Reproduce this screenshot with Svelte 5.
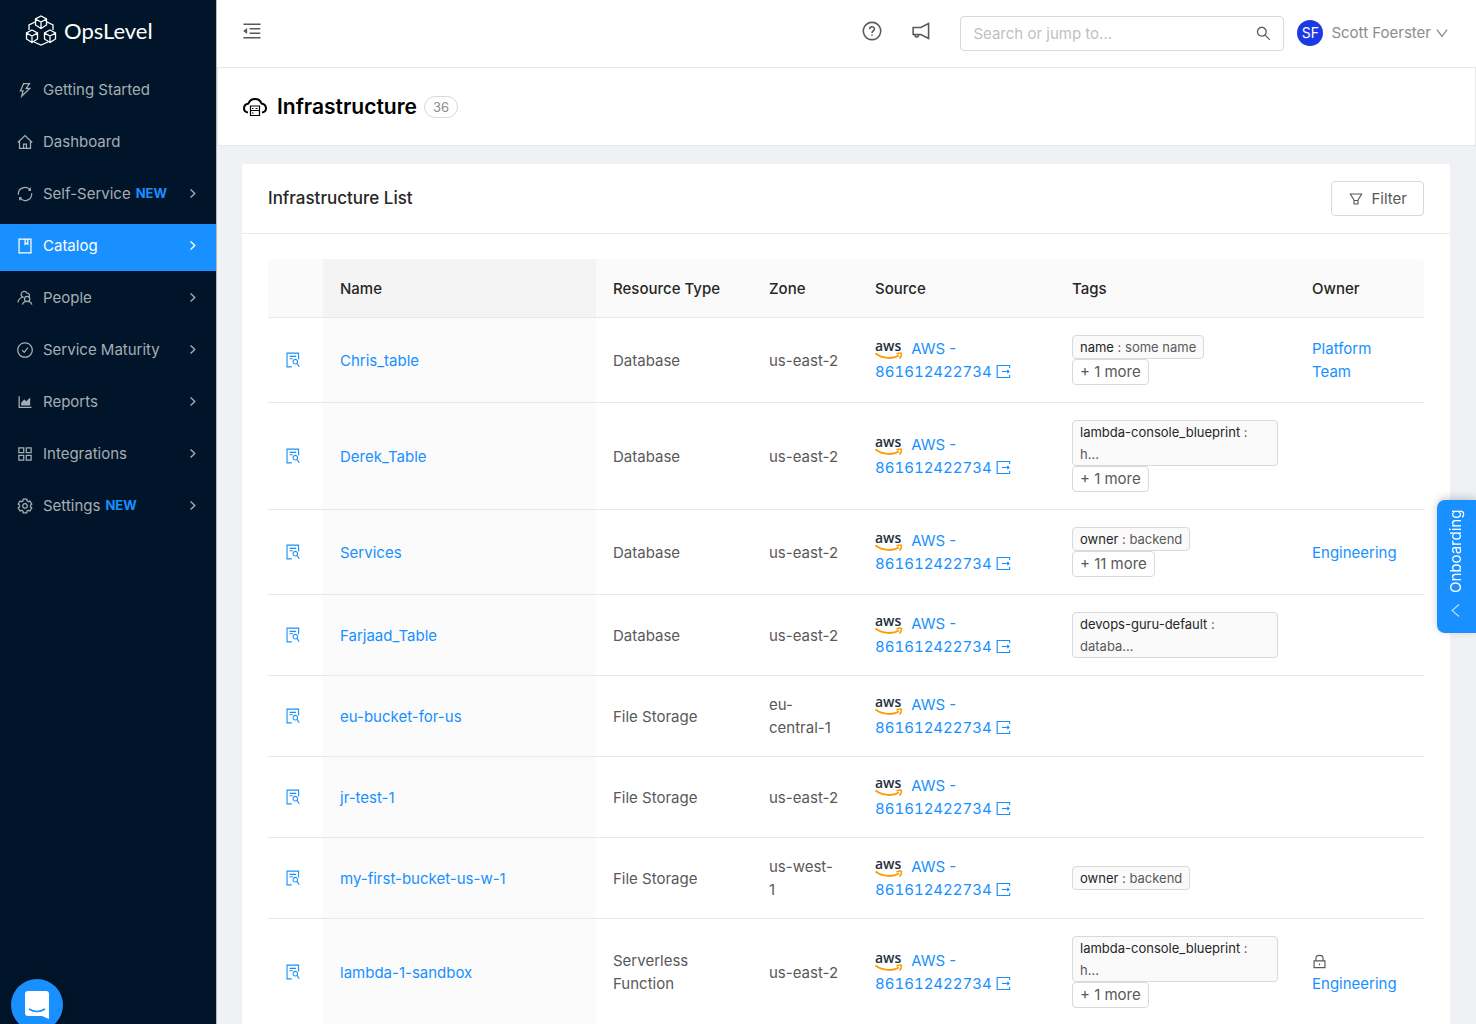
<script>
  const menu = [
    { label: 'Getting Started', icon: 'bolt' },
    { label: 'Dashboard', icon: 'home' },
    { label: 'Self-Service', icon: 'sync', isNew: true, children: true },
    { label: 'Catalog', icon: 'book', children: true, active: true },
    { label: 'People', icon: 'people', children: true },
    { label: 'Service Maturity', icon: 'check', children: true },
    { label: 'Reports', icon: 'chart', children: true },
    { label: 'Integrations', icon: 'apps', children: true },
    { label: 'Settings', icon: 'gear', isNew: true, children: true }
  ];

  const rows = [
    { name: 'Chris_table', type: 'Database', zone: 'us-east-2', tag: ['name', 'some name'], more: 1, owner: 'Platform Team' },
    { name: 'Derek_Table', type: 'Database', zone: 'us-east-2', tag: ['lambda-console_blueprint', 'h...'], more: 1 },
    { name: 'Services', type: 'Database', zone: 'us-east-2', tag: ['owner', 'backend'], more: 11, owner: 'Engineering' },
    { name: 'Farjaad_Table', type: 'Database', zone: 'us-east-2', tag: ['devops-guru-default', 'databa...'] },
    { name: 'eu-bucket-for-us', type: 'File Storage', zone: 'eu-\ncentral-1' },
    { name: 'jr-test-1', type: 'File Storage', zone: 'us-east-2' },
    { name: 'my-first-bucket-us-w-1', type: 'File Storage', zone: 'us-west-\n1', tag: ['owner', 'backend'] },
    { name: 'lambda-1-sandbox', type: 'Serverless Function', zone: 'us-east-2', tag: ['lambda-console_blueprint', 'h...'], more: 1, owner: 'Engineering', locked: true }
  ];

  const account = '861612422734';

  // six-toothed outline for the settings icon
  function gearPath() {
    const points = [];
    for (let i = 0; i < 6; i++) {
      for (const [offset, radius] of [[-21, 355], [-15, 450], [15, 450], [21, 355]]) {
        const a = ((i * 60 + 30 + offset) * Math.PI) / 180;
        points.push(`${Math.round(512 + radius * Math.cos(a))} ${Math.round(512 + radius * Math.sin(a))}`);
      }
    }
    return `M${points.join('L')}Z`;
  }

  const strokes = {
    bolt: 'M420 110H800L590 400H820L300 910L390 570H220Z',
    home: 'M50 540L512 100L974 540M160 450V920H864V450M420 920V640H604V920',
    sync: 'M90 560A425 425 0 0 1 850 260M934 464A425 425 0 0 1 174 764M850 110V275H730M174 914V750H294',
    book: 'M130 70H894V954H130ZM520 80V400l85-65 85 65V80',
    people: 'M430 470A190 190 0 1 1 620 190M60 800C70 640 170 520 340 480M650 570m-165 0a165 165 0 1 0 330 0a165 165 0 1 0-330 0M350 940C380 800 490 735 650 735S920 800 950 940M600 180C780 190 820 300 790 420',
    check: 'M512 50a462 462 0 1 0 1 0ZM330 520l130 140 235-300',
    apps: 'M120 120H430V430H120ZM594 120H904V430H594ZM120 594H430V904H120ZM594 594H904V904H594Z',
    gear: gearPath() + 'M512 365a147 147 0 1 0 1 0Z',
    help: 'M512 70a442 442 0 1 0 1 0ZM390 420C390 250 634 250 634 410C634 510 512 500 512 610M512 685V755',
    notice: 'M900 125V899L500 690H110V334H500ZM200 690C200 860 390 860 400 695',
    right: 'M360 190L690 512L360 834',
    down: 'M80 220L512 800L944 220',
    left: 'M750 100L280 512L750 924',
    doc: 'M430 954H130V70H870V480M290 280H710M290 430H500M660 620m-145 0a145 145 0 1 0 290 0a145 145 0 1 0-290 0M770 730L910 940',
    exit: 'M930 280V100H80V924H930V744M400 512H900M770 400L890 512L770 624',
    lock: 'M140 470H884V930H140ZM270 470V280C270 30 754 30 754 280V470M512 640V760'
  };

  const fills = {
    chart: 'M920 812H180V148c0-4-4-8-8-8h-66c-4 0-8 4-8 8v738c0 4 4 8 8 8h814c4 0 8-4 8-8v-66c0-4-4-8-8-8zm-650-84h566c4 0 8-4 8-8V244c0-7-9-11-14-6L592 469 467 345a8 8 0 0 0-11 0L267 554a8 8 0 0 0-3 6V720c0 4 4 8 8 8z',
    fold: 'M408 442h480c4 0 8-4 8-8v-56c0-4-4-8-8-8H408c-4 0-8 4-8 8v56c0 4 4 8 8 8zm-8 204c0 4 4 8 8 8h480c4 0 8-4 8-8v-56c0-4-4-8-8-8H408c-4 0-8 4-8 8v56zm504-486H120c-4 0-8 4-8 8v56c0 4 4 8 8 8h784c4 0 8-4 8-8v-56c0-4-4-8-8-8zm0 632H120c-4 0-8 4-8 8v56c0 4 4 8 8 8h784c4 0 8-4 8-8v-56c0-4-4-8-8-8zM115 519L272 642c6 5 14 0 14-7V389c0-7-8-12-14-7L115 505a9 9 0 0 0 0 14z',
    search: 'M910 854L650 595C690 543 712 479 712 412c0-80-31-155-88-212s-132-88-212-88-155 31-212 88-88 132-88 212 31 155 88 212 132 88 212 88c67 0 131-22 183-62l259 260a8 8 0 0 0 12 0l44-44a8 8 0 0 0 0-12zM570 570C528 613 472 636 412 636s-116-23-158-66S188 472 188 412s23-116 66-158 98-66 158-66 116 23 158 66 66 98 66 158-23 116-66 158z',
    filter: 'M880 154H144c-25 0-40 27-28 48L349 597V838c0 18 14 32 32 32h262c18 0 32-14 32-32V597L908 202c12-21-3-48-28-48zM603 798H421V642h182v156zm10-237l-10 17H421l-10-17L213 226h598L613 561z'
  };
</script>

{#snippet icon(name)}
  <svg class="icon" viewBox="0 0 1024 1024" aria-hidden="true">
    {#if fills[name]}
      <path class="solid" d={fills[name]} />
    {:else}
      <path class="line" d={strokes[name]} />
    {/if}
  </svg>
{/snippet}

{#snippet cube(x, y)}
  <g transform="translate({x} {y})">
    <path d="M0 -6L5.5 -3V3L0 6.5L-5.5 3V-3ZM-5.5 -3L0 0L5.5 -3M0 0V6" />
  </g>
{/snippet}

<div class="layout">
  <aside class="sidebar">
    <a class="brand" href="#home">
      <svg class="brand__mark" viewBox="0 0 32 32" aria-hidden="true">
        {@render cube(16, 8)}
        {@render cube(7, 22)}
        {@render cube(25, 22)}
        <path d="M10 8L4 11V16M22 8L28 11V16M9 28L16 31L23 28" />
      </svg>
      <span>OpsLevel</span>
    </a>
    <nav class="menu">
      {#each menu as item}
        <a class="menu__item" class:active={item.active} href="#{item.icon}">
          {@render icon(item.icon)}
          <span>{item.label}</span>
          {#if item.isNew}<span class="menu__new">NEW</span>{/if}
          {#if item.children}<span class="menu__arrow">{@render icon('right')}</span>{/if}
        </a>
      {/each}
    </nav>
  </aside>

  <div class="content">
    <header class="topbar">
      <button class="plain fold" aria-label="Collapse menu">{@render icon('fold')}</button>
      <button class="plain help" aria-label="Help">{@render icon('help')}</button>
      <button class="plain notice" aria-label="Announcements">{@render icon('notice')}</button>
      <div class="search">
        <input type="text" aria-label="Search" placeholder="Search or jump to..." />
        {@render icon('search')}
      </div>
      <button class="plain user">
        <span class="user__avatar">SF</span>
        <span>Scott Foerster</span>
        {@render icon('down')}
      </button>
    </header>

    <section class="heading">
      <svg class="heading__icon" viewBox="0 0 24 20" aria-hidden="true">
        <path d="M5 15.5C2 15 1 13 1 11.5C1 9 3 7 5.5 6.5C6.5 3.5 9 2 12 2C15 2 17.5 3.5 18.5 6.5C21 7 23 9 23 11.5C23 13 22 15 19 15.5" />
        <path class="thin" d="M7.5 9H16.5V18.5H7.5ZM7.5 13.5H16.5M9 11.5H10.5M9 16H10.5M12.5 11.5H14.5" />
      </svg>
      <h1>Infrastructure</h1>
      <span class="count">36</span>
    </section>

    <main class="card">
      <div class="card__head">
        <h2>Infrastructure List</h2>
        <button class="filter">{@render icon('filter')}Filter</button>
      </div>
      <div class="card__body">
        <table>
          <thead>
            <tr>
              <th class="col-open" aria-label="Details"></th>
              <th class="col-name">Name</th>
              <th class="col-type">Resource Type</th>
              <th class="col-zone">Zone</th>
              <th class="col-source">Source</th>
              <th class="col-tags">Tags</th>
              <th class="col-owner">Owner</th>
            </tr>
          </thead>
          <tbody>
            {#each rows as row}
              <tr>
                <td class="col-open"><a href="#open" aria-label="Open {row.name}">{@render icon('doc')}</a></td>
                <td class="col-name"><a href="#{row.name}">{row.name}</a></td>
                <td>{row.type}</td>
                <td class="col-zone">{row.zone}</td>
                <td>
                  <svg class="aws" viewBox="0 0 28 20" aria-hidden="true">
                    <text x="0" y="11">aws</text>
                    <path class="smile" d="M0.5 13.5C8 19 18 19 24 15.5" />
                    <path class="tip" d="M21.5 14C24 13 26 13 26.5 13.5C26.5 15 26 17 24.5 18.5" />
                  </svg>
                  <a class="source" href="#source">AWS - <span class="account">{account}</span> {@render icon('exit')}</a>
                </td>
                <td>
                  {#if row.tag}
                    <div class="tags">
                      <span class="tag"><b>{row.tag[0]}</b> : <span>{row.tag[1]}</span></span>
                      {#if row.more}<button class="more">+ {row.more} more</button>{/if}
                    </div>
                  {/if}
                </td>
                <td>
                  {#if row.locked}<span class="lock">{@render icon('lock')}</span>{/if}
                  {#if row.owner}<a href="#owner">{row.owner}</a>{/if}
                </td>
              </tr>
            {/each}
          </tbody>
        </table>
      </div>
    </main>
  </div>
</div>

<button class="onboarding"><span>Onboarding</span>{@render icon('left')}</button>

<button class="chat" aria-label="Open chat">
  <svg viewBox="0 0 24 28" aria-hidden="true">
    <path class="chat__box" d="M3 0H21Q24 0 24 3V28L17 25H3Q0 25 0 22V3Q0 0 3 0Z" />
    <path class="chat__smile" d="M4 18Q12 23 20 18" />
  </svg>
</button>

<style>
  :global(body) {
    background: #eff1f5;
  }

  .layout,
  .onboarding,
  .chat {
    font-family: Inter, "Liberation Sans", sans-serif;
    font-size: 15px;
    line-height: 23px;
    color: #595959;
  }

  .layout {
    display: flex;
    min-height: 100vh;
  }

  .layout :global(*) {
    box-sizing: border-box;
  }

  a {
    color: #1890ff;
    text-decoration: none;
  }

  button,
  input {
    font: inherit;
    color: inherit;
  }

  button {
    cursor: pointer;
  }

  .icon {
    width: 15px;
    height: 15px;
    flex: none;
  }

  .solid {
    fill: currentColor;
  }

  .line {
    fill: none;
    stroke: currentColor;
    stroke-width: 80;
  }

  .sidebar {
    width: 217px;
    flex: none;
    background: #001529;
    border-right: 1px solid #b3b9c0;
  }

  .brand {
    display: flex;
    align-items: center;
    gap: 7px;
    height: 68px;
    padding: 0 25px 8px;
    color: #fff;
    font-family: Lato, sans-serif;
    font-size: 22px;
  }

  .brand__mark {
    width: 32px;
    height: 32px;
    fill: none;
    stroke: #fff;
    stroke-width: 1.3;
  }

  .menu__item {
    display: flex;
    align-items: center;
    height: 47px;
    margin-bottom: 5px;
    padding: 0 17px 4px;
    color: #a6adb4;
  }

  .menu__item > .icon {
    width: 16px;
    height: 16px;
    margin-right: 10px;
  }

  .menu__item.active {
    background: #1890ff;
    color: #fff;
  }

  .menu__new {
    margin-left: 5px;
    color: #1890ff;
    font-size: 13px;
    font-weight: 700;
  }

  .menu__arrow {
    display: flex;
    margin-left: auto;
  }

  .menu__arrow .icon {
    width: 13px;
    height: 13px;
  }

  .menu__arrow .line {
    stroke-width: 110;
  }

  .content {
    flex: 1;
    min-width: 0;
  }

  .topbar {
    display: flex;
    align-items: center;
    height: 67px;
    padding-right: 28px;
    background: #fff;
  }

  .plain {
    display: flex;
    align-items: center;
    padding: 0;
    border: 0;
    background: none;
  }

  .fold {
    margin: 0 auto 6px 24px;
  }

  .help,
  .notice {
    margin: 0 29px 5px 0;
  }

  .fold .icon {
    width: 22px;
    height: 22px;
  }

  .help .icon,
  .notice .icon {
    width: 20px;
    height: 20px;
  }

  .search {
    display: flex;
    align-items: center;
    width: 324px;
    height: 35px;
    margin-right: 13px;
    padding: 0 11px 0 12px;
    border: 1px solid #d9d9d9;
    border-radius: 4px;
  }

  .search .icon {
    width: 17px;
    height: 17px;
  }

  .search input {
    flex: 1;
    min-width: 0;
    padding: 0;
    border: 0;
    outline: 0;
    background: none;
  }

  .search input::placeholder {
    color: #bfbfbf;
  }

  .user {
    gap: 5px;
    padding-bottom: 2px;
    color: #8c8c8c;
  }

  .user__avatar {
    width: 26px;
    margin-right: 3px;
    border-radius: 50%;
    background: #1d39e5;
    color: #fff;
    font-size: 14px;
    line-height: 26px;
    text-align: center;
  }

  .user .icon {
    width: 12px;
    height: 12px;
  }

  .user .line {
    stroke-width: 110;
  }

  .heading {
    display: flex;
    align-items: center;
    height: 79px;
    padding: 0 25px;
    border: 1px solid #e8e8e8;
    background: #fff;
  }

  .heading__icon {
    width: 24px;
    height: 20px;
    margin-right: 10px;
    fill: none;
    stroke: #000;
    stroke-width: 2;
  }

  .thin {
    stroke-width: 1.2;
  }

  h1 {
    margin: 0 7px 0 0;
    color: #000;
    font-size: 21px;
    font-weight: 600;
  }

  .count {
    padding: 0 8px;
    border: 1px solid #d9d9d9;
    border-radius: 11px;
    color: #8c8c8c;
    font-size: 13px;
    line-height: 20px;
  }

  .card {
    margin: 18px 26px 26px 25px;
    border-radius: 2px;
    background: #fff;
  }

  .card__head {
    display: flex;
    align-items: center;
    justify-content: space-between;
    height: 70px;
    padding: 0 26px;
    border-bottom: 1px solid #e8e8e8;
  }

  h2 {
    margin: 0;
    color: #262626;
    font-size: 17px;
    font-weight: 500;
  }

  .filter {
    display: flex;
    align-items: center;
    gap: 8px;
    height: 35px;
    padding: 0 16px;
    border: 1px solid #d9d9d9;
    border-radius: 4px;
    background: #fff;
  }

  .filter .icon {
    width: 16px;
    height: 16px;
  }

  .card__body {
    padding: 25px 26px;
  }

  table {
    width: 100%;
    table-layout: fixed;
    border-spacing: 0;
  }

  th,
  td {
    padding: 17px;
    border-bottom: 1px solid #e8e8e8;
    text-align: left;
  }

  th {
    background: #fafafa;
    color: #262626;
    font-weight: 500;
  }

  th.col-name {
    background: #f4f4f4;
  }

  td.col-name {
    background: #fbfbfb;
  }

  thead th {
    height: 59px;
  }

  th.col-open {
    width: 55px;
    border-radius: 4px 0 0;
  }

  td.col-open .icon {
    display: block;
    width: 16px;
    height: 16px;
  }

  td.col-open .line {
    stroke-width: 70;
  }

  .col-type {
    width: 156px;
  }

  .col-zone {
    width: 106px;
    white-space: pre-line;
  }

  .col-source {
    width: 197px;
  }

  .col-tags {
    width: 240px;
  }

  .col-owner {
    width: 129px;
    border-radius: 0 4px 0 0;
  }

  .aws {
    width: 28px;
    height: 20px;
    margin-right: 4px;
    overflow: visible;
    vertical-align: middle;
  }

  .aws text {
    fill: #252f3e;
    font-family: "Open Sans", sans-serif;
    font-size: 14px;
    font-weight: 600;
  }

  .smile,
  .tip {
    fill: none;
    stroke: #ff9900;
    stroke-width: 2;
  }

  .tip {
    stroke-width: 1.5;
  }

  .account {
    font-variant-numeric: tabular-nums;
  }

  .source .icon {
    vertical-align: -2px;
  }

  .tags {
    display: flex;
    flex-direction: column;
    align-items: flex-start;
  }

  .tag,
  .more {
    padding: 0 7px;
    border: 1px solid #d9d9d9;
    border-radius: 4px;
  }

  .tag {
    background: #fafafa;
    font-size: 13px;
    line-height: 22px;
  }

  .tag b {
    color: #262626;
    font-weight: 400;
  }

  .more {
    background: #fff;
    line-height: 24px;
  }

  .lock {
    display: block;
    height: 23px;
  }

  .lock .icon {
    vertical-align: middle;
  }

  .onboarding {
    position: fixed;
    top: 500px;
    right: 0;
    display: flex;
    flex-direction: row-reverse;
    align-items: center;
    justify-content: flex-end;
    gap: 10px;
    width: 39px;
    height: 133px;
    padding: 15px 0 11px 2px;
    border: 0;
    border-radius: 0 8px 8px 0;
    background: #1890ff;
    box-shadow: 0 2px 8px rgba(0, 0, 0, 0.2);
    color: #fff;
    writing-mode: vertical-rl;
    transform: rotate(180deg);
  }

  .onboarding .icon {
    transform: rotate(180deg);
    opacity: 0.7;
  }

  .chat {
    position: fixed;
    left: 11px;
    bottom: -7px;
    display: flex;
    align-items: center;
    justify-content: center;
    width: 52px;
    height: 52px;
    border: 0;
    border-radius: 50%;
    background: #1890ff;
    box-shadow: 0 1px 8px rgba(0, 0, 0, 0.3);
  }

  .chat svg {
    width: 24px;
    height: 28px;
    flex: none;
  }

  .chat__box {
    fill: #fff;
  }

  .chat__smile {
    fill: none;
    stroke: #1890ff;
    stroke-width: 1.5;
  }
</style>
